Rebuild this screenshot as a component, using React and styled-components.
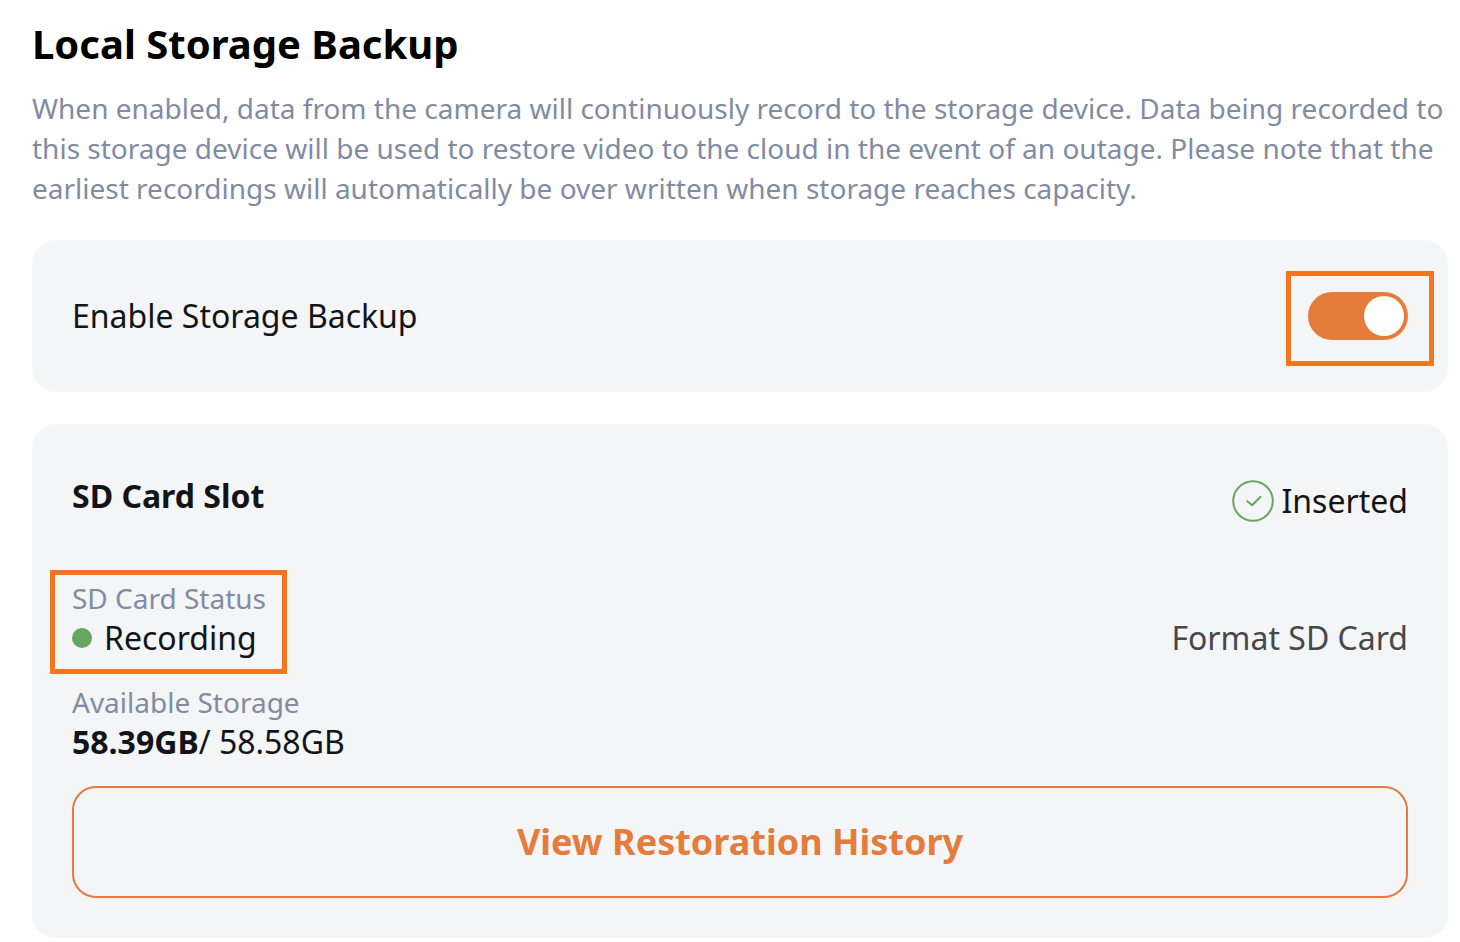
import React, { useState } from "react";
import styled, { createGlobalStyle } from "styled-components";

const GlobalStyle = createGlobalStyle`
    * {
        box-sizing: border-box;
    }
    body {
        margin: 0;
        background: #ffffff;
        color: #121417;
        font-family: "Noto Sans", "Open Sans", sans-serif;
        font-size: 32px;
        line-height: 40px;
    }
    h1, h2, p, dl, dd {
        margin: 0;
    }
    button {
        font-family: inherit;
        cursor: pointer;
    }
`;

const Page = styled.main`
    display: flex;
    flex-direction: column;
    gap: 32px;
    padding: 16px 12px 4px 32px;
`;

const Title = styled.h1`
    margin-bottom: 16px;
    color: #000000;
    font-size: 40px;
    font-weight: 700;
    line-height: 56px;
`;

const Description = styled.p`
    color: #818ca2;
    font-size: 28px;
`;

const Card = styled.section`
    padding: 52px 40px ${props => props.$bottom}px;
    border-radius: 24px;
    background: #f3f5f7;
`;

const Row = styled.div`
    display: flex;
    justify-content: space-between;
    align-items: ${props => props.$align || "center"};
`;

//orange frame drawn around the part that needs attention
const Highlight = styled.div`
    position: relative;
    display: flex;
    flex-direction: column;
    &::after {
        content: "";
        position: absolute;
        inset: ${props => props.$inset};
        border: 5px solid #f37421;
        pointer-events: none;
    }
`;

const Switch = styled.input`
    appearance: none;
    display: flex;
    justify-content: ${props => props.checked? "flex-end" : "flex-start"};
    width: 100px;
    height: 48px;
    margin: 0;
    padding: 4px;
    border-radius: 24px;
    background: ${props => props.checked? "#e57c3b" : "#b4bac6"};
    cursor: pointer;
    &::before {
        content: "";
        width: 40px;
        height: 40px;
        border-radius: 50%;
        background: #ffffff;
    }
`;

const CardTitle = styled.h2`
    font-size: 32px;
    font-weight: 700;
    line-height: 40px;
`;

const CardHeader = styled(Row)`
    margin-bottom: 56px;
`;

const Inserted = styled.div`
    display: flex;
    align-items: center;
    gap: 8px;
    padding-top: 4px;
`;

const Details = styled.dl`
    display: flex;
    flex-direction: column;
    gap: 24px;
    margin-bottom: 24px;
`;

const Label = styled.dt`
    color: #818ca2;
    font-size: 28px;
`;

const Value = styled.dd`
    display: flex;
    align-items: center;
    white-space: pre;
`;

const Dot = styled.span`
    width: 20px;
    height: 20px;
    margin-right: 12px;
    border-radius: 50%;
    background: #66a562;
`;

const TextButton = styled.button`
    padding: 0;
    border: 0;
    background: none;
    color: #46484a;
    font-size: 32px;
    line-height: 40px;
`;

const OutlineButton = styled.button`
    width: 100%;
    padding: 32px;
    border: 2px solid #e57c3b;
    border-radius: 24px;
    background: none;
    color: #e57c3b;
    font-size: 36px;
    font-weight: 700;
    line-height: 44px;
`;

const CheckIcon = () => (
    <svg width="42" height="42" viewBox="0 0 42 42" fill="none" stroke="#66a562" strokeWidth="2" aria-hidden="true">
        <circle cx="21" cy="21" r="19.8"/>
        <path d="M15.3 21.2L20.2 25.2L28.5 16.8" strokeLinecap="round" strokeLinejoin="round"/>
    </svg>
);

const App = () => {

    const [enabled, setEnabled] = useState(true);

    return (

        <>
            <GlobalStyle/>

            <Page>
                <header>
                    <Title>Local Storage Backup</Title>
                    <Description>
                        When enabled, data from the camera will continuously record to the storage device.
                        Data being recorded to this storage device will be used to restore video to the cloud
                        in the event of an outage. Please note that the earliest recordings will automatically
                        be over written when storage reaches capacity.
                    </Description>
                </header>

                <Card $bottom={52}>
                    <Row>
                        <label htmlFor="backup">Enable Storage Backup</label>
                        <Highlight $inset="-21px -26px -26px -22px">
                            <Switch
                                id="backup"
                                type="checkbox"
                                role="switch"
                                checked={enabled}
                                onChange={e => setEnabled(e.target.checked)}
                            />
                        </Highlight>
                    </Row>
                </Card>

                <Card $bottom={40}>
                    <CardHeader $align="flex-start">
                        <CardTitle>SD Card Slot</CardTitle>
                        <Inserted>
                            <CheckIcon/>
                            Inserted
                        </Inserted>
                    </CardHeader>

                    <Details>
                        <Row $align="flex-end">
                            <Highlight $inset="-8px -21px -16px -22px">
                                <Label>SD Card Status</Label>
                                <Value><Dot/>Recording</Value>
                            </Highlight>
                            <dd>
                                <TextButton type="button">Format SD Card</TextButton>
                            </dd>
                        </Row>
                        <div>
                            <Label>Available Storage</Label>
                            <Value><strong>58.39GB</strong>/ 58.58GB</Value>
                        </div>
                    </Details>

                    <OutlineButton type="button">View Restoration History</OutlineButton>
                </Card>
            </Page>
        </>

    )

}

export default App;
